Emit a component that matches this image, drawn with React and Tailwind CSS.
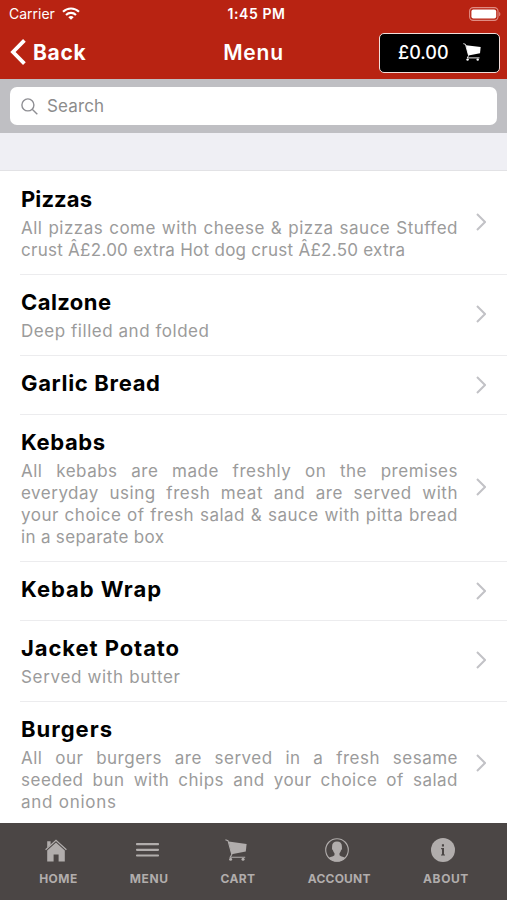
import React from "react";
import clsx from "clsx";

const categories = [
  {
    name: "Pizzas",
    nameTracking: "tracking-[0.1px]",
    lines: [
      "All pizzas come with cheese & pizza sauce Stuffed",
      "crust Â£2.00 extra Hot dog crust Â£2.50 extra",
    ],
    lastTracking: "tracking-[0.27px]",
  },
  {
    name: "Calzone",
    nameTracking: "tracking-[0.42px]",
    lines: ["Deep filled and folded"],
    lastTracking: "tracking-[0.54px]",
  },
  { name: "Garlic Bread", nameTracking: "tracking-[0.67px]", lines: [] },
  {
    name: "Kebabs",
    nameTracking: "tracking-[0.58px]",
    lines: [
      "All kebabs are made freshly on the premises",
      "everyday using fresh meat and are served with",
      "your choice of fresh salad & sauce with pitta bread",
      "in a separate box",
    ],
    lastTracking: "tracking-[0.32px]",
  },
  { name: "Kebab Wrap", nameTracking: "tracking-[0.96px]", lines: [] },
  {
    name: "Jacket Potato",
    nameTracking: "tracking-[0.92px]",
    lines: ["Served with butter"],
    lastTracking: "tracking-[0.67px]",
  },
  {
    name: "Burgers",
    nameTracking: "tracking-[1px]",
    lines: [
      "All our burgers are served in a fresh sesame",
      "seeded bun with chips and your choice of salad",
      "and onions",
    ],
    lastTracking: "tracking-[0.74px]",
  },
];

function CartIcon({ className }) {
  return (
    <svg viewBox="0 0 22 22" className={className} fill="none">
      <path d="M3.6 2.6 21.6 5 20.8 12.6 6.6 15.2Z" fill="currentColor" />
      <path
        d="M0.4 0.8 3 1.6 6.8 15.4 5.2 18.2H20.2"
        stroke="currentColor"
        strokeWidth="1.1"
      />
      <circle cx="5.6" cy="20.3" r="1.5" fill="currentColor" />
      <circle cx="18" cy="20.3" r="1.5" fill="currentColor" />
    </svg>
  );
}

function HomeIcon() {
  return (
    <svg viewBox="0 0 22 23" className="mr-[5px] h-[23px] w-[22px]" fill="currentColor">
      <path d="M2.2 2.2h3.4v3.5L2.2 8.8Z" />
      <path
        d="M0.6 10.8 11 1.2 21.4 10.8"
        fill="none"
        stroke="currentColor"
        strokeWidth="1.2"
      />
      <path d="M11 3.5 19.8 11.6V22.6H13.6V15.4H8.6V22.6H2.2V11.6Z" />
    </svg>
  );
}

function MenuIcon() {
  return (
    <svg viewBox="0 0 23 14" className="mr-[4px] h-[14px] w-[23px]" fill="currentColor">
      <rect y="0" width="23" height="2.2" rx="0.8" />
      <rect y="5.7" width="23" height="2.2" rx="0.8" />
      <rect y="11.4" width="23" height="2.2" rx="0.8" />
    </svg>
  );
}

function AccountIcon() {
  return (
    <svg viewBox="0 0 24 24" className="mr-[4px] size-6">
      <circle cx="12" cy="12" r="11.3" fill="none" stroke="currentColor" strokeWidth="1.1" />
      <path
        d="M12 3.4c3.3 0 5.1 2.1 4.9 5.4 0 1 .1 1.1.1 1.7 0 1-.8 1.4-1 2.1-.3 1.1-.8 1.9-1.5 2.6v1.8c.4 1.3 3.6 1.5 5.7 3.1a11.4 11.4 0 0 1-16.4 0c2.1-1.6 5.3-1.8 5.7-3.1v-1.8c-.7-.7-1.2-1.5-1.5-2.6-.2-.7-1-1.1-1-2.1 0-.6.1-.7.1-1.7-.2-3.3 1.6-5.4 4.9-5.4Z"
        fill="currentColor"
      />
    </svg>
  );
}

function AboutIcon() {
  return (
    <svg viewBox="0 0 24 24" className="mr-[6px] size-6">
      <circle cx="12" cy="12" r="12" fill="currentColor" />
      <path
        d="M10.9 6.2h2.1v2.2h-2.1ZM10.1 10h2.9v6.4h1v1.2h-4v-1.2h1v-5.2h-.9Z"
        fill="#4b4645"
      />
    </svg>
  );
}

const tabs = [
  { label: "HOME", icon: <HomeIcon />, width: "w-[39px]", tracking: "tracking-[0.5px]" },
  { label: "MENU", icon: <MenuIcon />, width: "w-[39px]", tracking: "tracking-[0.6px]" },
  {
    label: "CART",
    icon: <CartIcon className="-ml-1 size-[22px]" />,
    width: "w-[35px]",
    tracking: "tracking-[0.4px]",
  },
  { label: "ACCOUNT", icon: <AccountIcon />, width: "w-[64px]", tracking: "tracking-[0.2px]" },
  { label: "ABOUT", icon: <AboutIcon />, width: "w-[46px]", tracking: "tracking-[0.6px]" },
];

function StatusBar() {
  return (
    <div className="grid h-[27px] grid-cols-3 items-center pr-[6px] pl-[9px] text-sm leading-none">
      <div className="flex items-center gap-[7px]">
        <span>Carrier</span>
        <svg viewBox="0 0 18 13" className="h-[13px] w-[18px]" fill="none" stroke="currentColor">
          <path d="M1 4.8a11.5 11.5 0 0 1 16 0" strokeWidth="2.1" />
          <path d="M4 7.9a7.2 7.2 0 0 1 10 0" strokeWidth="2.1" />
          <path d="M6.3 10.2a4 4 0 0 1 5.4 0L9 12.8Z" fill="currentColor" stroke="none" />
        </svg>
      </div>
      <span className="pl-[3px] text-center font-semibold tracking-[0.6px]">1:45 PM</span>
      <svg viewBox="0 0 32 14" className="h-[14px] w-[32px] justify-self-end">
        <rect x="0.6" y="0.6" width="28.4" height="12.8" rx="3.6" fill="none" stroke="#e08d84" strokeWidth="1.1" />
        <rect x="2.4" y="2.4" width="24.8" height="9.2" rx="2" fill="white" />
        <path d="M30.2 4.9c1.5.5 1.5 3.7 0 4.2Z" fill="#e08d84" />
      </svg>
    </div>
  );
}

function CategoryRow({ category, first }) {
  const { name, nameTracking, lines, lastTracking } = category;
  return (
    <li className="pl-[20px]">
      <div
        className={clsx(
          "flex items-center pt-[14px] pr-[21px]",
          lines.length ? "pb-[13px]" : "pb-[18px]",
          !first && "border-t border-[#ececee]",
          first && "pt-[15px]"
        )}
      >
        <div className="w-[438px] shrink-0 pl-px">
          <h2
            className={clsx(
              "text-[22px] leading-[26px] font-bold whitespace-nowrap text-black",
              nameTracking
            )}
          >
            {name}
          </h2>
          {lines.length > 0 && (
            <div className="mt-[5px] text-[17px] leading-[22px] text-[#9b9b9b]">
              {lines.map((line, i) => (
                <p
                  key={line}
                  className={clsx(
                    i < lines.length - 1
                      ? "text-justify [text-align-last:justify] tracking-[0.5px]"
                      : lastTracking,
                    i === lines.length - 1 && "whitespace-nowrap"
                  )}
                >
                  {line}
                </p>
              ))}
            </div>
          )}
        </div>
        <svg
          viewBox="0 0 10 18"
          className={clsx(
            "ml-auto h-[18px] w-[10px] text-[#c2c2c6]",
            lines.length ? "mb-[3px]" : "mt-[3px]"
          )}
          fill="none"
          stroke="currentColor"
          strokeWidth="2"
        >
          <path d="M1 1 9 9 1 17" />
        </svg>
      </div>
    </li>
  );
}

export default function App() {
  return (
    <div className="flex h-[900px] w-[507px] flex-col overflow-hidden bg-white font-['Inter',sans-serif]">
      <header className="h-[79px] shrink-0 bg-[#b82312] text-white">
        <StatusBar />
        <div className="grid h-[50px] grid-cols-3 items-center pr-[7px] pl-[10px]">
          <div className="flex items-center gap-[7px]">
            <svg viewBox="0 0 16 26" className="-mt-px h-[26px] w-4" fill="none" stroke="currentColor" strokeWidth="3.8">
              <path d="M14.4 1.4 3 13 14.4 24.6" />
            </svg>
            <span className="pt-px text-[21px] font-bold tracking-[0.7px]">Back</span>
          </div>
          <h1 className="pt-px pr-[3px] text-center text-[21px] font-semibold tracking-[0.8px]">Menu</h1>
          <button className="mt-px flex h-[40px] w-[121px] items-center justify-self-end rounded-[5px] border-[1.5px] border-[#f3dedb] bg-black pl-[18px]">
            <span className="text-[18px] font-medium">£0.00</span>
            <CartIcon className="-mt-px ml-[14px] size-[18px]" />
          </button>
        </div>
      </header>

      <div className="flex h-[54px] shrink-0 items-center bg-[#bfbfc3] px-[10px]">
        <div className="flex h-[38px] w-full items-center gap-[9px] rounded-[7px] bg-white pl-[11px] text-[#8e8e93]">
          <svg viewBox="0 0 17 17" className="size-[17px]" fill="none" stroke="currentColor" strokeWidth="1.4">
            <circle cx="6.9" cy="6.9" r="6" />
            <path d="M11.2 11.2 16.3 16.3" />
          </svg>
          <span className="pt-[2px] text-[17px] tracking-[0.12px] text-[#8c8c8c]">Search</span>
        </div>
      </div>

      <div className="h-[38px] shrink-0 border-b border-[#e2e2e5] bg-[#efeff4]" />

      <ul className="min-h-0 flex-1 overflow-hidden">
        {categories.map((category, i) => (
          <CategoryRow key={category.name} category={category} first={i === 0} />
        ))}
      </ul>

      <nav className="flex h-[77px] shrink-0 justify-between bg-[#4b4645] pt-[14px] pr-[38px] pl-[39px] text-[#b1adac]">
        {tabs.map((tab) => (
          <div key={tab.label} className={clsx("flex flex-col items-center", tab.width)}>
            <div className="flex h-[26px] items-center justify-center">{tab.icon}</div>
            <span
              className={clsx(
                "mt-[8px] text-[12px] leading-4 font-bold whitespace-nowrap",
                tab.tracking
              )}
            >
              {tab.label}
            </span>
          </div>
        ))}
      </nav>
    </div>
  );
}
